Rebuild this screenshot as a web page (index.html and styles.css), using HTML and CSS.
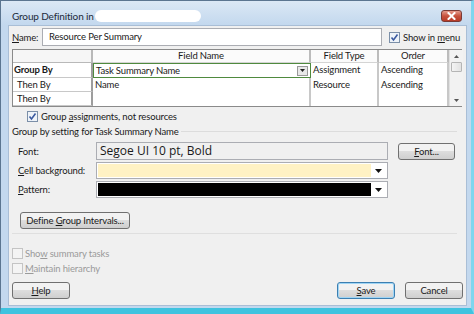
FILE: index.html
```html
<!DOCTYPE html>
<html lang="en">

<head>
  <meta charset="UTF-8">
  <title>Group Definition</title>
  <link rel="stylesheet" href="styles.css">
</head>

<body>
  <div class="window">
    <div class="titlebar">
      <span class="title">Group Definition in</span>
      <span class="redacted"></span>
      <span class="close">
        <svg xmlns="http://www.w3.org/2000/svg" width="9" height="8" viewBox="0 0 9 8">
          <path d="M1.5 1L7.5 7M7.5 1L1.5 7" stroke="#fff" stroke-width="2" stroke-linecap="square" />
        </svg>
      </span>
    </div>

    <div class="client">
      <div class="name-row">
        <span class="label"><u>N</u>ame:</span>
        <div class="textbox">Resource Per Summary</div>
        <label class="check">
          <span class="box checked">
            <svg xmlns="http://www.w3.org/2000/svg" width="9" height="9" viewBox="0 0 9 9">
              <path d="M1.5 4.5L3.5 7L7.5 1.5" stroke="#3b5aa0" stroke-width="1.6" fill="none" />
            </svg>
          </span>
          <span>Show in <u>m</u>enu</span>
        </label>
      </div>

      <div class="grid">
        <div class="corner"></div>
        <div class="head">Field Name</div>
        <div class="head">Field Type</div>
        <div class="head">Order</div>
        <div class="scroll">
          <span class="arrow">
            <svg xmlns="http://www.w3.org/2000/svg" width="5" height="3" viewBox="0 0 5 3"><path d="M0 3L2.5 0L5 3Z" fill="#555" /></svg>
          </span>
          <span class="thumb"></span>
          <span class="track"></span>
          <span class="arrow">
            <svg xmlns="http://www.w3.org/2000/svg" width="5" height="3" viewBox="0 0 5 3"><path d="M0 0L2.5 3L5 0Z" fill="#555" /></svg>
          </span>
        </div>

        <div class="rowhead bold">Group By</div>
        <div class="cell selected">
          <span>Task Summary Name</span>
          <span class="drop">
            <svg xmlns="http://www.w3.org/2000/svg" width="5" height="3" viewBox="0 0 5 3"><path d="M0 0L2.5 3L5 0Z" fill="#222" /></svg>
          </span>
        </div>
        <div class="cell">Assignment</div>
        <div class="cell">Ascending</div>

        <div class="rowhead">Then By</div>
        <div class="cell">Name</div>
        <div class="cell">Resource</div>
        <div class="cell">Ascending</div>

        <div class="rowhead">Then By</div>
        <div class="cell"></div>
        <div class="cell"></div>
        <div class="cell"></div>
      </div>

      <label class="check assign">
        <span class="box checked">
          <svg xmlns="http://www.w3.org/2000/svg" width="9" height="9" viewBox="0 0 9 9">
            <path d="M1.5 4.5L3.5 7L7.5 1.5" stroke="#3b5aa0" stroke-width="1.6" fill="none" />
          </svg>
        </span>
        <span>Group <u>a</u>ssignments, not resources</span>
      </label>

      <div class="group-title">
        <span>Group by setting for Task Summary Name</span>
        <span class="rule"></span>
      </div>

      <div class="settings">
        <div class="setting">
          <span class="label">Font:</span>
          <div class="field font-field">Segoe UI 10 pt, Bold</div>
          <button class="btn font-btn"><u>F</u>ont...</button>
        </div>
        <div class="setting">
          <span class="label"><u>C</u>ell background:</span>
          <div class="field combo">
            <span class="swatch yellow"></span>
            <span class="combo-arrow">
              <svg xmlns="http://www.w3.org/2000/svg" width="7" height="4" viewBox="0 0 7 4"><path d="M0 0L3.5 4L7 0Z" fill="#111" /></svg>
            </span>
          </div>
        </div>
        <div class="setting">
          <span class="label"><u>P</u>attern:</span>
          <div class="field combo">
            <span class="swatch black"></span>
            <span class="combo-arrow">
              <svg xmlns="http://www.w3.org/2000/svg" width="7" height="4" viewBox="0 0 7 4"><path d="M0 0L3.5 4L7 0Z" fill="#111" /></svg>
            </span>
          </div>
        </div>
      </div>

      <div class="intervals">
        <button class="btn">Define <u>G</u>roup Intervals...</button>
      </div>

      <div class="disabled-opts">
        <label class="check disabled">
          <span class="box"></span>
          <span>Sho<u>w</u> summary tasks</span>
        </label>
        <label class="check disabled">
          <span class="box"></span>
          <span><u>M</u>aintain hierarchy</span>
        </label>
      </div>

      <div class="footer">
        <button class="btn wide"><u>H</u>elp</button>
        <span class="spacer"></span>
        <button class="btn wide default"><u>S</u>ave</button>
        <button class="btn wide">Cancel</button>
      </div>
    </div>
  </div>
</body>

</html>
```
FILE: styles.css
```css
* {
  box-sizing: border-box;
}

body {
  margin: 0;
  width: 474px;
  height: 314px;
  overflow: hidden;
  font-family: Lato, "Open Sans", sans-serif;
  font-size: 9.5px;
  letter-spacing: -0.15px;
  color: #1a1a1a;
}

.window {
  width: 474px;
  height: 314px;
  background: #c3d8ee;
  border: 1px solid #5b7590;
  border-bottom: 6px solid #3fc3df;
  border-right: 3px solid #7fd6ee;
  display: flex;
  flex-direction: column;
}

.window > *,
.client > * {
  flex-shrink: 0;
}

.titlebar {
  height: 24px;
  display: flex;
  align-items: center;
  padding: 5px 8px 0 11px;
  background: linear-gradient(#dbe8f5, #c3d8ee);
}

.titlebar .title {
  font-size: 10px;
  color: #1c2a3a;
}

.titlebar .redacted {
  width: 106px;
  height: 12px;
  margin-left: 1px;
  border-radius: 6px;
  background: #fff;
}

.titlebar .close {
  margin-left: auto;
  width: 21px;
  height: 12px;
  margin-right: 1px;
  border: 1px solid #7a3a35;
  border-radius: 3px;
  background: linear-gradient(#e59b8c, #c7523d 50%, #b73b28);
  display: flex;
  align-items: center;
  justify-content: center;
}

.client {
  flex: 1;
  margin: 0 4px 2px 7px;
  background: #f0f0f0;
  border: 1px solid #a9bed6;
  padding: 2px 3px 0 3px;
  display: flex;
  flex-direction: column;
}

.name-row {
  display: flex;
  align-items: center;
  height: 18px;
}

.name-row .label {
  width: 30px;
}

.textbox {
  width: 340px;
  height: 18px;
  background: #fff;
  border: 1px solid #abadb3;
  padding: 0 6px;
  line-height: 16px;
}

.check {
  display: flex;
  align-items: center;
  gap: 3px;
  white-space: nowrap;
}

.name-row .check {
  margin-left: 7px;
}

.box {
  width: 11px;
  height: 11px;
  border: 1px solid #8e8f8f;
  background: linear-gradient(135deg, #dcdcdc, #fff);
  display: flex;
  align-items: center;
  justify-content: center;
}

.box.checked {
  border-color: #7b8fa8;
  background: #eef3f9;
}

.grid {
  margin-top: 3px;
  width: 450px;
  height: 58px;
  display: grid;
  grid-template-columns: 80px 218px 68px 70px 14px;
  grid-template-rows: 13px 15px 14px 14px;
  border: 1px solid #8a8a8a;
  background: #fff;
}

.corner {
  background: #f6f6f6;
  border-right: 2px solid #b9b9b9;
  border-bottom: 1px solid #b9b9b9;
}

.head {
  text-align: center;
  line-height: 12px;
  border-right: 2px solid #bcbcbc;
  border-bottom: 1px solid #d4d4d4;
  background: #fbfbfb;
}

.rowhead {
  padding-left: 4px;
  line-height: 13px;
  background: #fff;
  border-right: 2px solid #9d9d9d;
  border-bottom: 1px solid #c8c8c8;
}

.rowhead.bold {
  font-weight: 700;
  padding-left: 1px;
}

.cell {
  line-height: 14px;
  padding-left: 2px;
  border-right: 2px solid #c8c8c8;
}

.cell.selected {
  border: 1px solid #4f8a3e;
  display: flex;
  justify-content: space-between;
  align-items: center;
  padding-right: 2px;
}

.cell.selected .drop {
  width: 11px;
  height: 10px;
  background: #e8e8e8;
  border: 1px solid #999;
  display: flex;
  align-items: center;
  justify-content: center;
}

.scroll {
  grid-row: 1 / 5;
  grid-column: 5;
  background: #f2f2f2;
  border-left: 1px solid #e0e0e0;
  display: flex;
  flex-direction: column;
  align-items: center;
}

.scroll .arrow {
  height: 12px;
  display: flex;
  align-items: center;
}

.scroll .thumb {
  width: 11px;
  height: 10px;
  border: 1px solid #b5b5b5;
  border-radius: 1px;
  background: linear-gradient(90deg, #f4f4f4, #e2e2e2);
}

.scroll .track {
  flex: 1;
}

.assign {
  margin: 3px 0 0 15px;
  height: 12px;
}

.group-title {
  margin-top: 3px;
  height: 12px;
  display: flex;
  align-items: center;
  gap: 2px;
}

.group-title .rule {
  flex: 1;
  height: 1px;
  background: #dcdcdc;
  margin-right: 6px;
}

.settings {
  margin-top: 5px;
  display: flex;
  flex-direction: column;
  gap: 2px;
}

.setting {
  display: flex;
  align-items: center;
  padding-left: 6px;
}

.setting .label {
  width: 78px;
}

.field {
  width: 292px;
  height: 17px;
  border: 1px solid #abadb3;
  background: #fff;
}

.font-field {
  height: 18px;
  background: #f0f0f0;
  padding-left: 3px;
  font-family: "Open Sans", sans-serif;
  font-size: 12px;
  letter-spacing: 0;
  line-height: 16px;
}

.combo {
  display: flex;
  padding: 1px;
}

.swatch {
  flex: 1;
}

.swatch.yellow {
  background: #fff2c4;
}

.swatch.black {
  background: #000;
}

.combo-arrow {
  width: 15px;
  display: flex;
  align-items: center;
  justify-content: center;
}

.btn {
  font-family: inherit;
  font-size: 9.5px;
  letter-spacing: -0.15px;
  color: #1a1a1a;
  height: 17px;
  padding: 0 5px;
  white-space: nowrap;
  border: 1px solid #707070;
  border-radius: 3px;
  background: linear-gradient(#f2f2f2 50%, #dddddd 50%, #cfcfcf);
}

.font-btn {
  margin-left: 10px;
  width: 57px;
}

.intervals {
  margin: 14px 6px 0 0;
  padding: 0 0 4px 8px;
  border-bottom: 1px solid #dfdfdf;
}

.intervals .btn {
  min-width: 110px;
}

.disabled-opts {
  margin-top: 13px;
  display: flex;
  flex-direction: column;
  gap: 3px;
}

.check.disabled {
  color: #9a9a9a;
  gap: 2px;
  height: 12px;
}

.check.disabled .box {
  border-color: #c4c4c4;
  background: #f4f4f4;
}

.footer {
  margin-top: 8px;
  display: flex;
  gap: 10px;
}

.footer .spacer {
  flex: 1;
}

.btn.wide {
  width: 58px;
}

.btn.default {
  border-color: #3c7fb1;
  box-shadow: inset 0 0 0 1px #9fd5f5;
}
```
